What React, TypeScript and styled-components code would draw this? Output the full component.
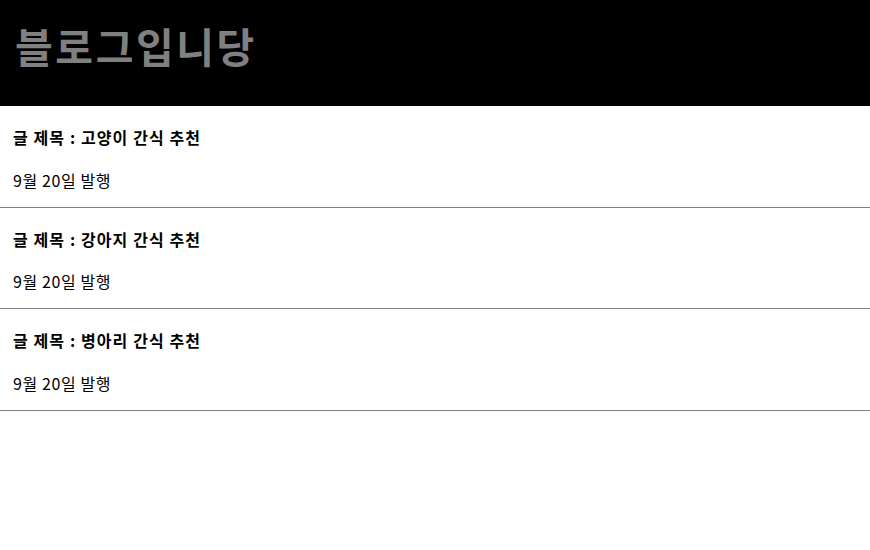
import styled, { createGlobalStyle } from 'styled-components'

const GlobalStyle = createGlobalStyle`
  body {
    margin: 0;
    font-family: "Noto Sans CJK KR", "Noto Sans", sans-serif;
    background: white;
  }
`

const BlackNav = styled.div`
  display: flex;
  align-items: center;
  box-sizing: border-box;
  height: 106px;
  padding: 0 0 16px 15px;
  background: black;
`

const Logo = styled.h1`
  margin: 0;
  font-size: 41px;
  font-weight: bold;
  letter-spacing: 2.6px;
  color: gray;
`

const ListItem = styled.div`
  padding: 0 13px;
  border-bottom: 1px solid gray;
`

const Title = styled.h4`
  margin: 1.33em 0;
  font-size: 16px;
  line-height: 21px;
  font-weight: bold;
  letter-spacing: 1.1px;
`

const Date = styled.p`
  margin: 0;
  padding-bottom: 16px;
  font-size: 16px;
  line-height: 21px;
  letter-spacing: 0.6px;
`

const posts = ['고양이 간식 추천', '강아지 간식 추천', '병아리 간식 추천']

function App() {
  return (
    <>
      <GlobalStyle />
      <BlackNav>
        <Logo>블로그입니당</Logo>
      </BlackNav>
      {posts.map((post) => (
        <ListItem key={post}>
          <Title>글 제목 : {post}</Title>
          <Date>9월 20일 발행</Date>
        </ListItem>
      ))}
    </>
  )
}

export default App
